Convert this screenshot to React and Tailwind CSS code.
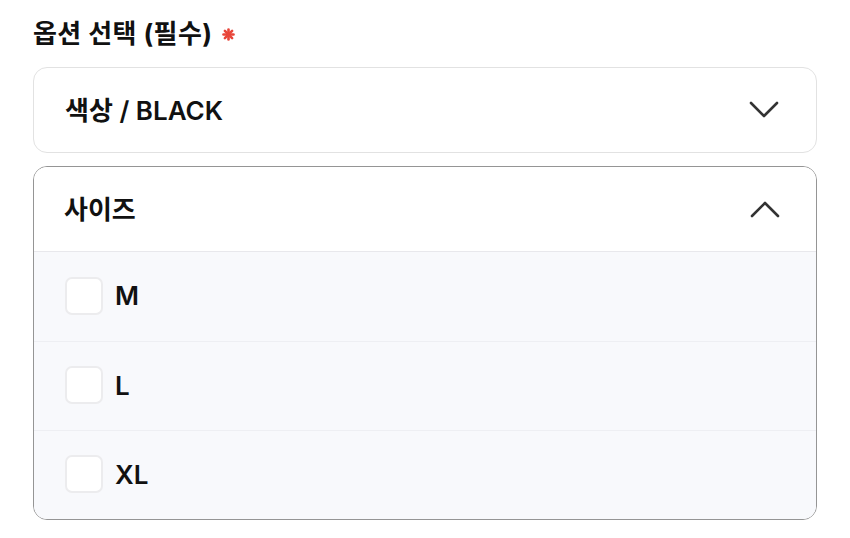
import React, { useState } from 'react';

const FONT = { fontFamily: '"Inter", "Noto Sans CJK KR", sans-serif' };

const sizes = ['M', 'L', 'XL'];

function Chevron({ up }) {
  return (
    <svg width="30" height="18" viewBox="0 0 30 18" fill="none" className="shrink-0">
      <path
        d={up ? 'M2 16 L15 3 L28 16' : 'M2 2 L15 15 L28 2'}
        stroke="#333"
        strokeWidth="2.6"
        strokeLinecap="round"
        strokeLinejoin="round"
      />
    </svg>
  );
}

// eight-spoke "required" mark
function RequiredMark() {
  return (
    <svg width="13" height="13" viewBox="0 0 13 13" className="mt-[3px]">
      <g stroke="#e8463a" strokeWidth="2.6" strokeLinecap="round">
        <path d="M6.5 1.5 V11.5" />
        <path d="M1.5 6.5 H11.5" />
        <path d="M2.9 2.9 L10.1 10.1" />
        <path d="M10.1 2.9 L2.9 10.1" />
      </g>
    </svg>
  );
}

export default function App() {
  const [checked, setChecked] = useState({});
  const [open, setOpen] = useState(true);

  const toggle = (s) => setChecked((c) => ({ ...c, [s]: !c[s] }));

  return (
    <div className="w-[850px] h-[538px] bg-white px-[33px] pt-[16px] text-[#111]" style={FONT}>
      <div className="flex items-center gap-[10px] h-[34px]">
        <h2 className="text-[26px] font-bold tracking-[0.4px]">옵션 선택 (필수)</h2>
        <RequiredMark />
      </div>

      <button className="mt-[17px] w-full h-[86px] flex items-center justify-between pl-[31px] pr-[37px] border border-[#e2e2e2] rounded-[14px] bg-white">
        <span className="text-[26px] font-semibold">색상 / BLACK</span>
        <Chevron />
      </button>

      <div className="mt-[13px] w-full border-[1.5px] border-[#959595] rounded-[14px] overflow-hidden">
        <button
          onClick={() => setOpen(!open)}
          className="w-full h-[85px] flex items-center justify-between pl-[30px] pr-[36px] bg-white border-b border-[#e8e8ec]"
        >
          <span className="text-[26px] font-semibold">사이즈</span>
          <Chevron up={open} />
        </button>
        {open && (
          <ul className="bg-[#f8f9fc]">
            {sizes.map((s, i) => (
              <li
                key={s}
                onClick={() => toggle(s)}
                className={`h-[89px] flex items-center gap-[12px] pl-[31px] pb-[2px] cursor-pointer ${i > 0 ? 'border-t border-[#eeeff3]' : ''}`}
              >
                <span className="w-[38px] h-[38px] rounded-[7px] border-2 border-[#ececee] bg-white flex items-center justify-center">
                  {checked[s] && (
                    <svg width="20" height="20" viewBox="0 0 20 20">
                      <path d="M4 10 L8.5 14.5 L16 6" stroke="#111" strokeWidth="2.4" fill="none" />
                    </svg>
                  )}
                </span>
                <span className="text-[26px] font-semibold">{s}</span>
              </li>
            ))}
          </ul>
        )}
      </div>
    </div>
  );
}
